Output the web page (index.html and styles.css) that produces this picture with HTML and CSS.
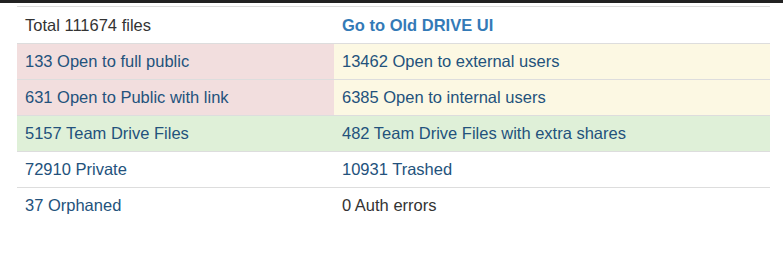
FILE: index.html
```html
<!DOCTYPE html>
<html lang="en">
<head>
    <meta charset="UTF-8">
    <meta name="viewport" content="width=device-width, initial-scale=1.0">
    <title>Drive Stats</title>
    <link rel="stylesheet" href="styles.css">
</head>
<body>
    <div class="topbar"></div>
    <div class="container">
        <table class="stats">
            <tr class="head">
                <td>Total 111674 files</td>
                <td><a class="old-ui" href="#">Go to Old DRIVE UI</a></td>
            </tr>
            <tr>
                <td class="danger"><a href="#">133 Open to full public</a></td>
                <td class="warning"><a href="#">13462 Open to external users</a></td>
            </tr>
            <tr>
                <td class="danger"><a href="#">631 Open to Public with link</a></td>
                <td class="warning"><a href="#">6385 Open to internal users</a></td>
            </tr>
            <tr>
                <td class="success"><a href="#">5157 Team Drive Files</a></td>
                <td class="success"><a href="#">482 Team Drive Files with extra shares</a></td>
            </tr>
            <tr>
                <td><a href="#">72910 Private</a></td>
                <td><a href="#">10931 Trashed</a></td>
            </tr>
            <tr>
                <td><a href="#">37 Orphaned</a></td>
                <td>0 Auth errors</td>
            </tr>
        </table>
    </div>
</body>
</html>
```

FILE: styles.css
```css
body {
    font-family: "Liberation Sans", Arial, sans-serif;
    font-size: 16.5px;
    color: #333;
    margin: 0;
    background: #fff;
}
.topbar {
    height: 3px;
    background: #222;
}
.container {
    padding: 3px 13px 0 17px;
}
.stats {
    width: 100%;
    border-collapse: collapse;
    border-top: 1px solid #ddd;
}
.stats td {
    padding: 8px;
    line-height: 19px;
    border-top: 1px solid #ddd;
    vertical-align: top;
}
.stats tr.head td {
    border-top: none;
    padding-top: 9px;
}
.stats td:first-child {
    width: 301px;
}
.stats a {
    color: #23527c;
    text-decoration: none;
}
.stats a.old-ui {
    color: #337ab7;
    font-weight: bold;
}
.danger {
    background: #f2dede;
}
.warning {
    background: #fcf8e3;
}
.success {
    background: #dff0d8;
}
```
